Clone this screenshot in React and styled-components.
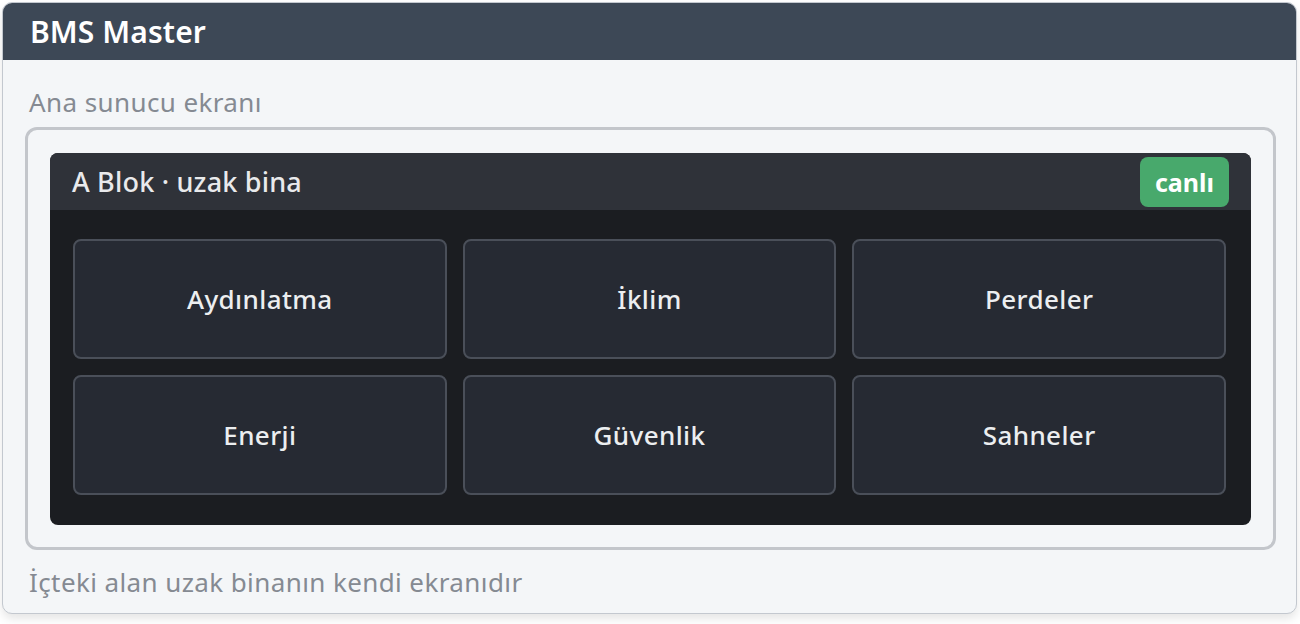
import React from 'react';
import styled, { createGlobalStyle } from 'styled-components';

const GlobalStyle = createGlobalStyle`
  html, body {
    margin: 0;
    padding: 0;
    background: #ffffff;
  }
  body {
    font-family: "Noto Sans", "Liberation Sans", sans-serif;
  }
`

const Page = styled.div`
  padding: 2px 3px 12px 2px;
`

const Card = styled.section`
  background: #f4f6f8;
  border: 1px solid #c3c8cf;
  border-radius: 10px;
  overflow: hidden;
  box-shadow: 0 5px 10px rgba(0, 0, 0, 0.1);
`

const CardHeader = styled.header`
  background: #3d4856;
  height: 57px;
  display: flex;
  align-items: center;
  padding: 0 27px;
`

const Title = styled.h1`
  margin: 0;
  font-size: 30px;
  font-weight: 600;
  color: #ffffff;
  letter-spacing: 0.1px;
`

const CardBody = styled.div`
  padding: 26px 20px 14px 22px;
  display: flex;
  flex-direction: column;
`

const Caption = styled.p`
  margin: 0 0 ${p => p.gap || 0}px 4px;
  font-size: 26px;
  line-height: 33px;
  letter-spacing: 0.4px;
  color: #858a92;
`

const Frame = styled.div`
  border: 3px solid #c3c6cb;
  border-radius: 12px;
  padding: 23px 22px 22px 22px;
  margin-bottom: 16px;
`

const Screen = styled.div`
  background: #1b1d21;
  border-radius: 8px;
  overflow: hidden;
`

const ScreenHeader = styled.div`
  background: #2f3239;
  height: 57px;
  display: flex;
  align-items: center;
  justify-content: space-between;
  padding: 0 22px 0 22px;
`

const ScreenTitle = styled.h2`
  margin: 0;
  font-size: 27px;
  font-weight: 500;
  letter-spacing: 0.2px;
  color: #e9eaec;
`

const Badge = styled.span`
  background: #48a96c;
  color: #ffffff;
  font-size: 25px;
  font-weight: 700;
  border-radius: 8px;
  height: 50px;
  padding: 0 15px;
  display: flex;
  align-items: center;
`

const Grid = styled.div`
  display: grid;
  grid-template-columns: repeat(3, 1fr);
  grid-auto-rows: 120px;
  gap: 16px;
  padding: 29px 25px 30px 23px;
`

const Tile = styled.button`
  box-sizing: border-box;
  background: #262a33;
  border: 2px solid #4a4f59;
  border-radius: 8px;
  color: #eceef0;
  font-family: inherit;
  font-size: 26px;
  font-weight: 500;
  letter-spacing: 0.4px;
  display: flex;
  align-items: center;
  justify-content: center;
  padding: 0;
  cursor: pointer;
`

const tiles = ['Aydınlatma', 'İklim', 'Perdeler', 'Enerji', 'Güvenlik', 'Sahneler'];

function App() {
  return (
    <>
      <GlobalStyle />
      <Page>
        <Card>
          <CardHeader>
            <Title>BMS Master</Title>
          </CardHeader>
          <CardBody>
            <Caption gap={8}>Ana sunucu ekranı</Caption>
            <Frame>
              <Screen>
                <ScreenHeader>
                  <ScreenTitle>A Blok · uzak bina</ScreenTitle>
                  <Badge>canlı</Badge>
                </ScreenHeader>
                <Grid>
                  {tiles.map(t => (
                    <Tile key={t}>{t}</Tile>
                  ))}
                </Grid>
              </Screen>
            </Frame>
            <Caption>İçteki alan uzak binanın kendi ekranıdır</Caption>
          </CardBody>
        </Card>
      </Page>
    </>
  );
}

export default App;
